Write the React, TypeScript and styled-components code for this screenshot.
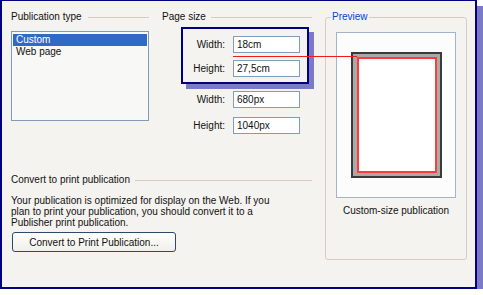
import styled, { createGlobalStyle } from 'styled-components'

const GlobalStyle = createGlobalStyle`
  html, body {
    margin: 0;
    padding: 0;
    background: #ffffff;
  }
  body {
    font-family: "Liberation Sans", Arial, sans-serif;
    font-size: 10px;
    color: #111;
  }
`

const panelBg = '#f4f3ef'
const shadowBlue = '#7a7ac6'

// Окно диалога с тёмно-синей рамкой и тенью
const Dialog = styled.div`
  position: relative;
  box-sizing: border-box;
  width: 477px;
  height: 289px;
  border: 2px solid #000080;
  border-top-width: 1px;
  background: ${panelBg};
  box-shadow: 6px 6px 0 ${shadowBlue};
  padding: 10px 0 0 9px;
  display: grid;
  grid-template-columns: 138px 150px 142px;
  grid-template-rows: 123px auto;
  column-gap: 13px;
  row-gap: 40px;
  align-items: start;
`

const GroupHeader = styled.div<{ $gap?: number }>`
  display: flex;
  align-items: center;
  height: 12px;
  line-height: 12px;
  white-space: nowrap;
  &::after {
    content: '';
    flex: 1;
    height: 1px;
    background: #d2cfbf;
    margin-left: ${(p) => p.$gap ?? 6}px;
  }
`

const Column = styled.div`
  display: flex;
  flex-direction: column;
`

const ListBox = styled.ul`
  box-sizing: border-box;
  margin: 8px 0 0;
  padding: 2px 1px;
  height: 90px;
  list-style: none;
  border: 1px solid #7f9db9;
  background: #f8f8f6;
`

const ListItem = styled.li<{ $selected?: boolean }>`
  height: 12px;
  line-height: 12px;
  padding-left: 3px;
  background: ${(p) => (p.$selected ? '#316ac5' : 'transparent')};
  color: ${(p) => (p.$selected ? '#ffffff' : '#111')};
`

// Выделенная рамка вокруг полей размера
const Highlight = styled.div`
  box-sizing: border-box;
  margin: 4px 0 0 19px;
  width: 128px;
  border: 2px solid #000080;
  box-shadow: 5px 5px 0 ${shadowBlue};
  padding: 7px 6px 5px 0;
  display: flex;
  flex-direction: column;
  gap: 7px;
`

const Fields = styled.div`
  margin: 7px 0 0 21px;
  display: flex;
  flex-direction: column;
  gap: 9px;
`

const FieldRow = styled.div`
  display: grid;
  grid-template-columns: 42px 67px;
  column-gap: 8px;
  align-items: center;
`

const FieldLabel = styled.span`
  text-align: right;
  line-height: 12px;
`

const TextBox = styled.div`
  box-sizing: border-box;
  height: 17px;
  line-height: 15px;
  padding-left: 3px;
  border: 1px solid #7f9db9;
  background: #ffffff;
`

const PreviewGroup = styled.div`
  grid-column: 3;
  grid-row: 1 / 3;
  box-sizing: border-box;
  margin-top: 6px;
  height: 243px;
  border: 1px solid #d2cfbf;
  border-radius: 3px;
  display: flex;
  flex-direction: column;
  align-items: center;
`

const Legend = styled.div`
  align-self: flex-start;
  margin: -7px 0 0 5px;
  padding: 0 1px;
  height: 12px;
  line-height: 12px;
  background: ${panelBg};
  color: #0046d5;
`

const Frame = styled.div`
  box-sizing: border-box;
  margin-top: 9px;
  width: 120px;
  height: 166px;
  border: 1px solid #a3b3c8;
  background: #fcfcfc;
  display: flex;
  align-items: center;
  justify-content: center;
`

const Page = styled.div`
  box-sizing: border-box;
  width: 91px;
  height: 126px;
  border: 2px solid #3a3a3a;
  background: #a9a9a9;
  padding: 3px 3px 3px 4px;
  display: flex;
`

const Sheet = styled.div`
  flex: 1;
  border: 2px solid #ff3b3b;
  background: #ffffff;
`

const Caption = styled.div`
  margin-top: 7px;
  line-height: 12px;
`

const ConvertSection = styled.div`
  grid-column: 1 / 3;
  grid-row: 2;
  display: flex;
  flex-direction: column;
  align-items: flex-start;
`

const Paragraph = styled.p`
  margin: 9px 0 0;
  line-height: 11px;
  white-space: nowrap;
`

const Button = styled.button`
  box-sizing: border-box;
  margin: 4px 0 0 1px;
  width: 164px;
  height: 20px;
  padding: 0;
  border: 1px solid #2c4a6c;
  border-radius: 3px;
  background: linear-gradient(#ffffff, #f0efe8);
  font-family: inherit;
  font-size: 10px;
  color: #111;
`

// Красная линия-указатель от поля к превью
const Connector = styled.div`
  position: absolute;
  left: 231px;
  top: 55px;
  width: 124px;
  height: 1px;
  background: #ee1c1c;
`

export default function App() {
  return (
    <>
      <GlobalStyle />
      <Dialog>
        <Column>
          <GroupHeader>Publication type</GroupHeader>
          <ListBox>
            <ListItem $selected>Custom</ListItem>
            <ListItem>Web page</ListItem>
          </ListBox>
        </Column>

        <Column>
          <GroupHeader $gap={5}>Page size</GroupHeader>
          <Highlight>
            <FieldRow>
              <FieldLabel>Width:</FieldLabel>
              <TextBox>18cm</TextBox>
            </FieldRow>
            <FieldRow>
              <FieldLabel>Height:</FieldLabel>
              <TextBox>27,5cm</TextBox>
            </FieldRow>
          </Highlight>
          <Fields>
            <FieldRow>
              <FieldLabel>Width:</FieldLabel>
              <TextBox>680px</TextBox>
            </FieldRow>
            <FieldRow>
              <FieldLabel>Height:</FieldLabel>
              <TextBox>1040px</TextBox>
            </FieldRow>
          </Fields>
        </Column>

        <PreviewGroup>
          <Legend>Preview</Legend>
          <Frame>
            <Page>
              <Sheet />
            </Page>
          </Frame>
          <Caption>Custom-size publication</Caption>
        </PreviewGroup>

        <ConvertSection>
          <GroupHeader $gap={5} style={{ alignSelf: 'stretch' }}>
            Convert to print publication
          </GroupHeader>
          <Paragraph>
            Your publication is optimized for display on the Web. If you
            <br />
            plan to print your publication, you should convert it to a
            <br />
            Publisher print publication.
          </Paragraph>
          <Button>Convert to Print Publication...</Button>
        </ConvertSection>

        <Connector />
      </Dialog>
    </>
  )
}
